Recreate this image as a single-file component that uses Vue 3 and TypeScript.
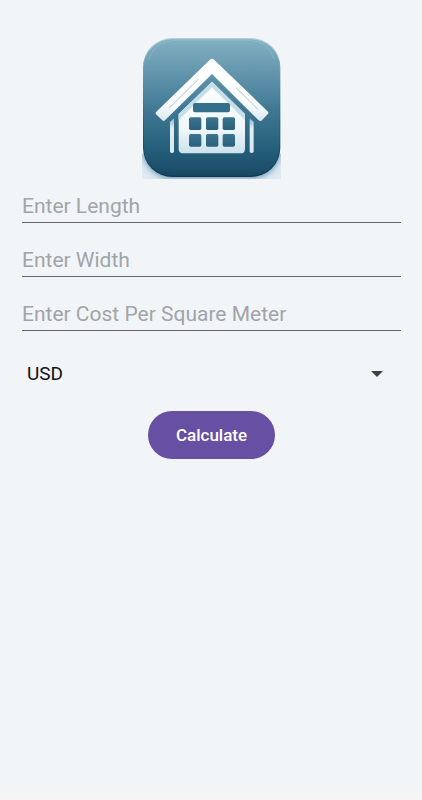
<script setup lang="ts">
import { ref } from 'vue'

interface Field {
  id: string
  label: string
  value: string
}

const fields = ref<Field[]>([
  { id: 'length', label: 'Enter Length', value: '' },
  { id: 'width', label: 'Enter Width', value: '' },
  { id: 'cost', label: 'Enter Cost Per Square Meter', value: '' },
])
const currency = ref('USD')
const windowColumns = [159, 210, 260]
const windowRows = [256, 306]
</script>

<template>
  <div class="screen">
    <main class="content">
      <svg class="logo" viewBox="18 18 417 423" role="img" aria-label="House calculator">
        <defs>
          <linearGradient id="tile" x1="0" y1="0" x2="0" y2="1">
            <stop offset="0" stop-color="#84b0c2" />
            <stop offset="0.2" stop-color="#689bb1" />
            <stop offset="0.5" stop-color="#427a95" />
            <stop offset="0.8" stop-color="#265f7b" />
            <stop offset="0.95" stop-color="#1b4f6b" />
            <stop offset="1" stop-color="#174660" />
          </linearGradient>
          <linearGradient id="rim" x1="0" y1="0" x2="0" y2="1">
            <stop offset="0" stop-color="#b3d0db" />
            <stop offset="0.25" stop-color="#6798ad" />
            <stop offset="0.6" stop-color="#2b627e" />
            <stop offset="1" stop-color="#123750" />
          </linearGradient>
          <filter id="soft" x="-20%" y="-20%" width="140%" height="140%">
            <feGaussianBlur stdDeviation="10" />
          </filter>
          <clipPath id="lower">
            <rect x="18" y="365" width="417" height="76" />
          </clipPath>
          <linearGradient id="wall" x1="0" y1="0" x2="0" y2="1">
            <stop offset="0" stop-color="#ffffff" />
            <stop offset="0.65" stop-color="#f0f7fa" />
            <stop offset="1" stop-color="#cbe2eb" />
          </linearGradient>
          <linearGradient id="roof" x1="0" y1="0" x2="0" y2="1">
            <stop offset="0.7" stop-color="#ffffff" />
            <stop offset="1" stop-color="#d8e8f0" />
          </linearGradient>
          <linearGradient id="post" x1="0" y1="0" x2="0" y2="1">
            <stop offset="0" stop-color="#8db8cb" />
            <stop offset="0.3" stop-color="#e2eff5" />
            <stop offset="1" stop-color="#d5e7ef" />
          </linearGradient>
          <linearGradient id="pane" x1="0" y1="0" x2="0" y2="1">
            <stop offset="0" stop-color="#3b748f" />
            <stop offset="1" stop-color="#2a607c" />
          </linearGradient>
        </defs>
        <g clip-path="url(#lower)">
          <rect x="18" y="365" width="417" height="76" fill="#dfeaf2" />
          <rect x="21" y="22" width="412" height="417" rx="88" fill="#5f8fad" filter="url(#soft)" />
        </g>
        <rect x="21" y="18" width="412" height="417" rx="88" fill="url(#rim)" />
        <rect x="24" y="22" width="406" height="409" rx="84" fill="url(#tile)" />
        <path d="M38 82Q54 30 112 25H342Q398 29 416 82" fill="none" stroke="#a7cad7" stroke-width="2" opacity="0.6" />
        <path d="M102 270L114 259V360Q108 366 102 360Z" fill="url(#post)" />
        <path d="M341 259L353 270V360Q347 366 341 360Z" fill="url(#post)" />
        <path d="M128 246L228 149L327 246V350Q327 364 314 364H142Q128 364 128 350Z" fill="url(#wall)" />
        <path d="M128 246L228 149L327 246V264L228 166L128 264Z" fill="#c6dee8" />
        <path
          d="M221 84Q228 77 235 84L396 239Q399 243 395 247L376 266Q372 269 368 265L228 126L87 265Q83 269 79 265L60 247Q57 243 61 239Z"
          fill="url(#roof)"
        />
        <path d="M187 142L100 227M301 169L365 231" fill="none" stroke="#c8dde8" stroke-width="4" stroke-linecap="round" />
        <rect x="171" y="213" width="111" height="28" rx="6" fill="#34708b" />
        <template v-for="y in windowRows" :key="y">
          <rect v-for="x in windowColumns" :key="x" :x="x" :y="y" width="37" height="38" rx="5" fill="url(#pane)" />
        </template>
      </svg>

      <form class="form" @submit.prevent>
        <div class="fields">
          <input
            v-for="field in fields"
            :id="field.id"
            :key="field.id"
            v-model="field.value"
            class="field"
            type="text"
            inputmode="decimal"
            :placeholder="field.label"
            :aria-label="field.label"
          />
        </div>
        <div class="picker">
          <select v-model="currency" class="select" aria-label="Currency">
            <option value="USD">USD</option>
          </select>
          <svg class="arrow" viewBox="0 0 12 6" aria-hidden="true">
            <path d="M0 0H12L6 6Z" fill="#3f3f43" />
          </svg>
        </div>
        <button class="calculate" type="submit">Calculate</button>
      </form>
    </main>
    <div class="system-bar"></div>
  </div>
</template>

<style>
body {
  margin: 0;
}
</style>

<style scoped>
.screen {
  display: flex;
  flex-direction: column;
  min-height: 100vh;
  background: #f1f5f8;
  font-family: Roboto, "Liberation Sans", sans-serif;
}

.content {
  display: flex;
  flex: 1;
  flex-direction: column;
  align-items: center;
  padding: 38px 21px 24px 22px;
}

.logo {
  display: block;
  width: 139px;
  height: 141px;
}

.form {
  display: flex;
  flex-direction: column;
  align-items: center;
  align-self: stretch;
}

.fields {
  display: flex;
  flex-direction: column;
  gap: 10px;
  align-self: stretch;
}

.field {
  box-sizing: border-box;
  width: 100%;
  height: 44px;
  padding: 10px 0 0;
  border: 0;
  border-bottom: 1px solid #68666d;
  border-radius: 0;
  outline: none;
  background: transparent;
  color: #1c1b1f;
  font: 400 21px/28px Roboto, "Liberation Sans", sans-serif;
}

.field::placeholder {
  color: #a2a4a8;
  opacity: 1;
}

.picker {
  display: grid;
  grid-template-columns: 1fr auto;
  align-items: center;
  align-self: stretch;
  margin-top: 19px;
}

.select {
  grid-area: 1 / 1 / 2 / 3;
  width: 100%;
  height: 48px;
  padding: 0 36px 0 5px;
  border: 0;
  outline: none;
  background: transparent;
  color: #111113;
  font: 400 19px/24px Roboto, "Liberation Sans", sans-serif;
  appearance: none;
}

.arrow {
  grid-area: 1 / 2;
  width: 12px;
  height: 6px;
  margin-right: 18px;
  pointer-events: none;
}

.calculate {
  height: 48px;
  margin-top: 13px;
  padding: 0 28px;
  border: 0;
  border-radius: 24px;
  background: #674fa3;
  color: #ffffff;
  font: 500 17px/24px Roboto, "Liberation Sans", sans-serif;
}

.system-bar {
  height: 7px;
  background: #f5f5f5;
}
</style>
